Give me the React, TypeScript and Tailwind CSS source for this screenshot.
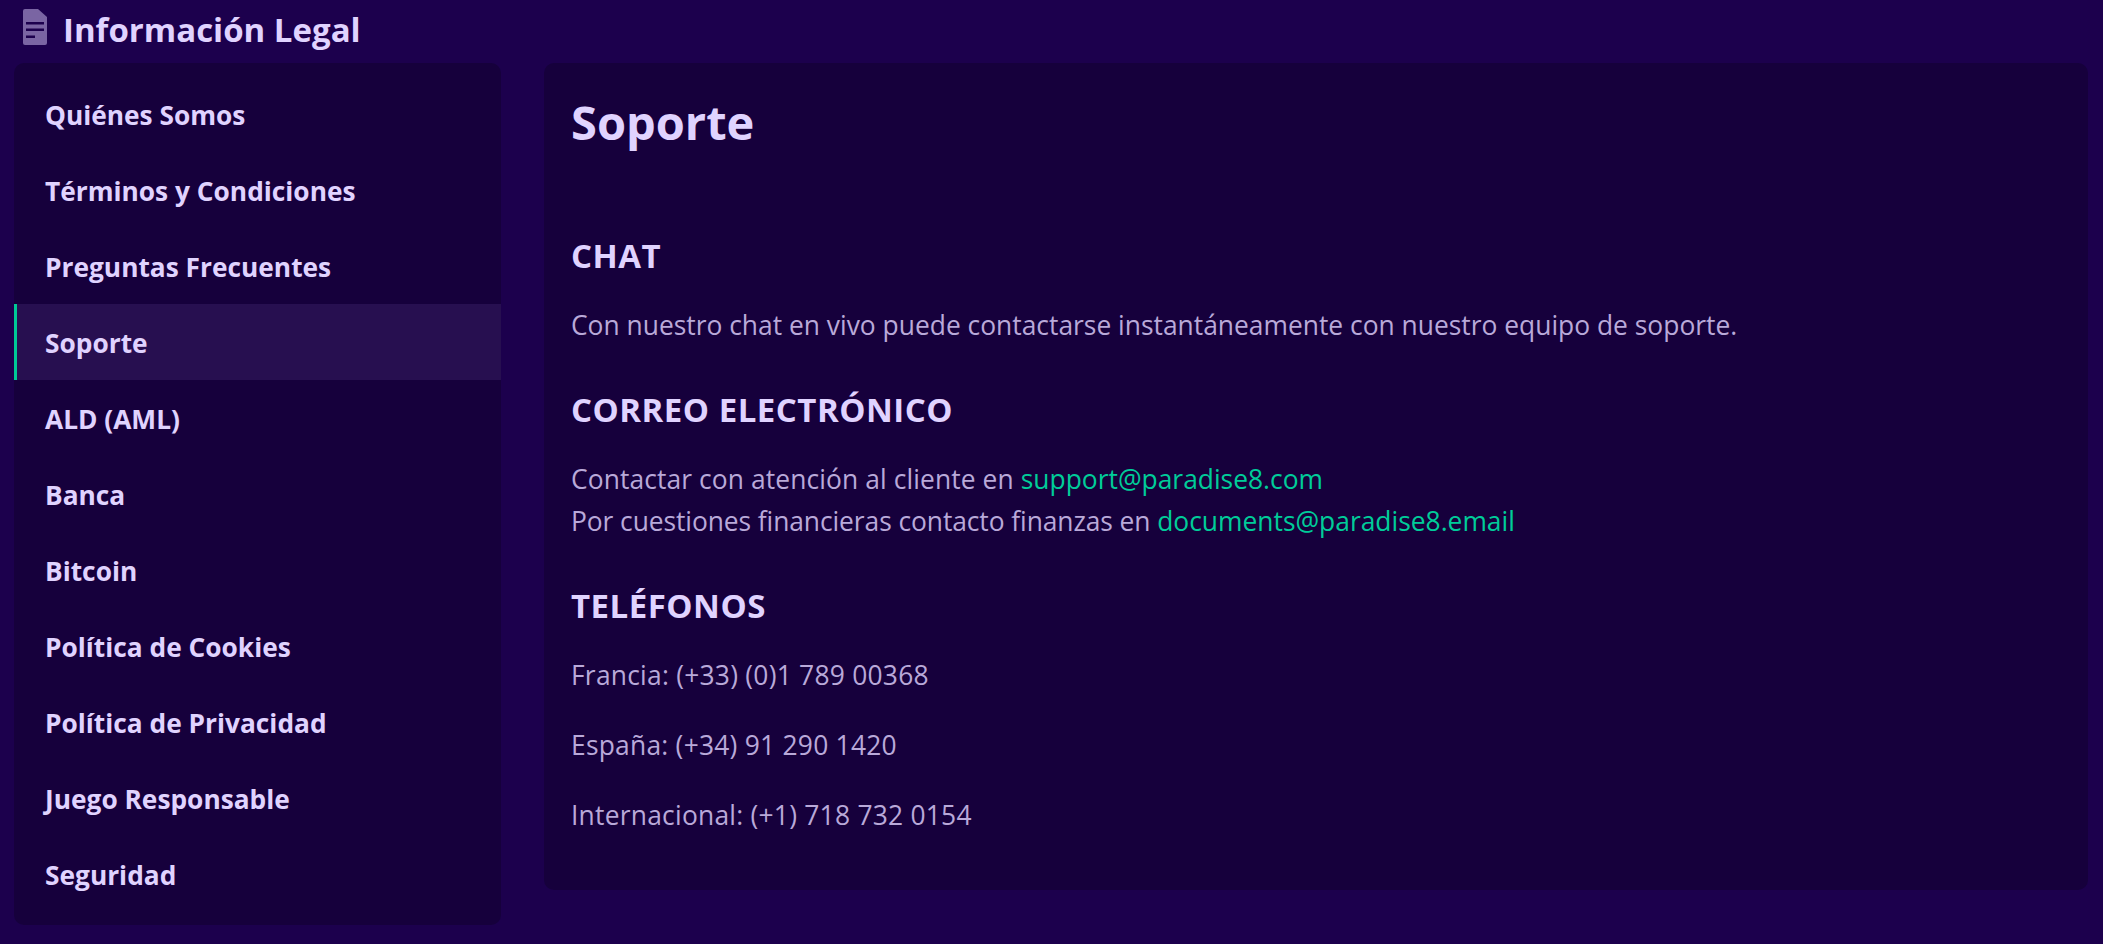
import React from 'react';

const navItems = [
  'Quiénes Somos',
  'Términos y Condiciones',
  'Preguntas Frecuentes',
  'Soporte',
  'ALD (AML)',
  'Banca',
  'Bitcoin',
  'Política de Cookies',
  'Política de Privacidad',
  'Juego Responsable',
  'Seguridad',
];

const App: React.FC = () => {
  return (
    <div className="h-[944px] overflow-hidden bg-[#1c004d] pl-[14px] pr-[15px] font-['Open_Sans',sans-serif] text-[#e0d3ff]">
      {/* Header */}
      <div className="flex h-[63px] items-start pl-[9px] pt-[9px]">
        <svg className="h-[36px] w-[24px] text-[#7a65a3]" viewBox="0 0 24 36" fill="currentColor">
          <path d="M2 0h13l9 8v26a2 2 0 0 1-2 2H2a2 2 0 0 1-2-2V2a2 2 0 0 1 2-2Z" />
          <path d="M3 13h18v2.5H3ZM3 19.5h18V22H3ZM3 26.5h9V29H3Z" fill="#1c004d" />
        </svg>
        <h1 className="ml-[16px] text-[33px] leading-[42px] font-bold">Información Legal</h1>
      </div>

      <div className="flex items-start gap-[43px]">
        {/* Sidebar */}
        <nav className="w-[487px] shrink-0 rounded-[10px] bg-[#16003c] pt-[13px] pb-[13px]">
          {navItems.map((item) => (
            <a
              key={item}
              className={`flex h-[76px] items-center pt-[3px] text-[26.3px] font-bold ${
                item === 'Soporte' ? 'border-l-[3px] border-[#00c896] bg-[#270f50] pl-[28px]' : 'pl-[31px]'
              }`}
            >
              {item}
            </a>
          ))}
        </nav>

        {/* Content */}
        <main className="h-[827px] flex-1 rounded-[10px] bg-[#16003c] px-[27px] pt-[27px]">
          <h2 className="text-[47px] leading-[64px] font-bold">Soporte</h2>

          <h3 className="mt-[81px] text-[33px] leading-[42px] font-bold tracking-[0.5px]">CHAT</h3>
          <p className="mt-[27px] text-[26.4px] leading-[42px] text-[#b9a9d9]">
            Con nuestro chat en vivo puede contactarse instantáneamente con nuestro equipo de soporte.
          </p>

          <h3 className="mt-[43px] text-[33px] leading-[42px] font-bold tracking-[0.5px]">CORREO ELECTRÓNICO</h3>
          <p className="mt-[27px] text-[26.4px] leading-[42px] text-[#b9a9d9]">
            <span className="tracking-[0.1px]">Contactar con atención al cliente en </span>
            <a className="text-[#00cc99]">support@paradise8.com</a>
            <br />
            <span className="tracking-[-0.08px]">Por cuestiones financieras contacto finanzas en </span>
            <a className="text-[#00cc99]">documents@paradise8.email</a>
          </p>

          <h3 className="mt-[43px] text-[33px] leading-[42px] font-bold tracking-[0.5px]">TELÉFONOS</h3>
          <p className="mt-[27px] text-[26.4px] leading-[42px] tracking-[0.24px] text-[#b9a9d9]">Francia: (+33) (0)1 789 00368</p>
          <p className="mt-[28px] text-[26.4px] leading-[42px] tracking-[0.24px] text-[#b9a9d9]">España: (+34) 91 290 1420</p>
          <p className="mt-[28px] text-[26.4px] leading-[42px] tracking-[0.24px] text-[#b9a9d9]">Internacional: (+1) 718 732 0154</p>
        </main>
      </div>
    </div>
  );
};

export default App;
